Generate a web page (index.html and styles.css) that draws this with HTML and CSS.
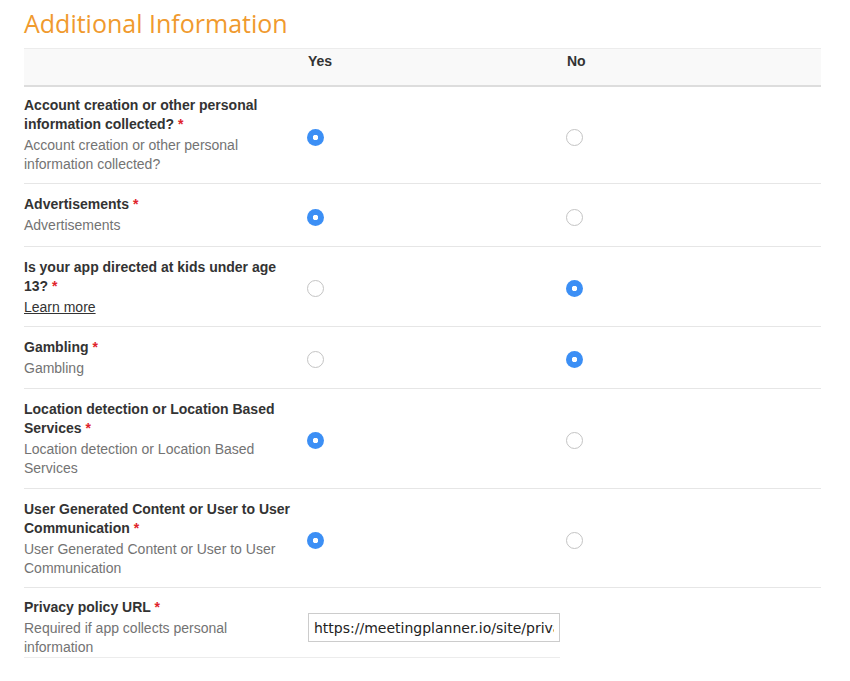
FILE: index.html
```html
<!DOCTYPE html>
<html>
<head>
<meta charset="utf-8">
<link rel="stylesheet" href="styles.css">
</head>
<body>
<div class="page">
  <h1 class="title">Additional Information</h1>
  <div class="table">
    <div class="head">
      <div></div>
      <div class="col-head">Yes</div>
      <div class="col-head">No</div>
    </div>

    <div class="row first">
      <div class="label-cell">
        <div class="label">Account creation or other personal information collected? <span class="req">*</span></div>
        <div class="desc">Account creation or other personal information collected?</div>
      </div>
      <div class="radio-cell"><span class="radio checked"></span></div>
      <div class="radio-cell"><span class="radio"></span></div>
    </div>

    <div class="row loose">
      <div class="label-cell">
        <div class="label">Advertisements <span class="req">*</span></div>
        <div class="desc">Advertisements</div>
      </div>
      <div class="radio-cell"><span class="radio checked"></span></div>
      <div class="radio-cell"><span class="radio"></span></div>
    </div>

    <div class="row tight">
      <div class="label-cell">
        <div class="label">Is your app directed at kids under age 13? <span class="req">*</span></div>
        <div class="desc"><a class="learn" href="#">Learn more</a></div>
      </div>
      <div class="radio-cell"><span class="radio"></span></div>
      <div class="radio-cell"><span class="radio checked"></span></div>
    </div>

    <div class="row">
      <div class="label-cell">
        <div class="label">Gambling <span class="req">*</span></div>
        <div class="desc">Gambling</div>
      </div>
      <div class="radio-cell"><span class="radio"></span></div>
      <div class="radio-cell"><span class="radio checked"></span></div>
    </div>

    <div class="row">
      <div class="label-cell">
        <div class="label">Location detection or Location Based Services <span class="req">*</span></div>
        <div class="desc">Location detection or Location Based Services</div>
      </div>
      <div class="radio-cell"><span class="radio checked"></span></div>
      <div class="radio-cell"><span class="radio"></span></div>
    </div>

    <div class="row tight">
      <div class="label-cell">
        <div class="label">User Generated Content or User to User Communication <span class="req">*</span></div>
        <div class="desc">User Generated Content or User to User Communication</div>
      </div>
      <div class="radio-cell"><span class="radio checked"></span></div>
      <div class="radio-cell"><span class="radio"></span></div>
    </div>

    <div class="row last">
      <div class="label-cell">
        <div class="label">Privacy policy URL <span class="req">*</span></div>
        <div class="desc">Required if app collects personal information</div>
      </div>
      <div class="input-cell"><input class="url" type="text" value="https://meetingplanner.io/site/privacy"></div>
    </div>
  </div>
</div>
</body>
</html>
```
FILE: styles.css
```css
html, body {
  margin: 0;
  padding: 0;
  background: #ffffff;
}
body {
  font-family: "Liberation Sans", Arial, Helvetica, sans-serif;
  font-size: 14px;
  color: #333333;
}
.page {
  padding: 0 29px 0 24px;
}
.title {
  margin: 0;
  padding-top: 6px;
  height: 48px;
  box-sizing: border-box;
  font-family: "Open Sans", sans-serif;
  font-weight: 400;
  font-size: 25px;
  line-height: 34px;
  color: #f09a2e;
}
.head {
  display: grid;
  grid-template-columns: 284px 259px 1fr;
  height: 36px;
  background: #f9f9f9;
  border-top: 1px solid #ececec;
  border-bottom: 2px solid #dddddd;
}
.col-head {
  font-weight: bold;
  font-size: 14px;
  color: #333333;
  line-height: 19px;
  padding-top: 3px;
}
.row {
  display: grid;
  grid-template-columns: 284px 259px 1fr;
  border-bottom: 1px solid #e6e6e6;
}
.label-cell {
  padding: 11px 8px 10px 0;
}
.row.first .label-cell {
  padding-top: 9px;
  padding-bottom: 9px;
}
.row.loose .label-cell {
  padding-bottom: 11px;
}
.row.tight .label-cell {
  padding-bottom: 9px;
}
.label {
  font-weight: bold;
  line-height: 19px;
  color: #333333;
}
.req {
  color: #e0232b;
}
.desc {
  margin-top: 2px;
  line-height: 19px;
  color: #737373;
}
.learn {
  color: #333333;
  text-decoration: underline;
}
.radio-cell {
  display: flex;
  align-items: center;
  padding-top: 4px;
}
.radio {
  display: block;
  width: 17px;
  height: 17px;
  box-sizing: border-box;
  border-radius: 50%;
  border: 1px solid #c4c4c4;
  background: #ffffff;
  margin-left: -1px;
}
.radio.checked {
  border: none;
  background: radial-gradient(circle, #ffffff 0, #ffffff 2.5px, #3c8ff5 3px);
}
.row.last {
  grid-template-columns: 284px 1fr;
  width: 536px;
  border-bottom: 1px solid #ececec;
}
.row.last .label-cell {
  padding-top: 10px;
  padding-bottom: 0;
}
.input-cell {
  padding-top: 25px;
}
.url {
  display: block;
  width: 252px;
  height: 29px;
  box-sizing: border-box;
  border: 1px solid #cccccc;
  border-radius: 0;
  padding: 0 5px;
  font-family: "DejaVu Sans", Verdana, sans-serif;
  font-size: 14px;
  color: #222222;
  background: #ffffff;
  outline: none;
}
```
